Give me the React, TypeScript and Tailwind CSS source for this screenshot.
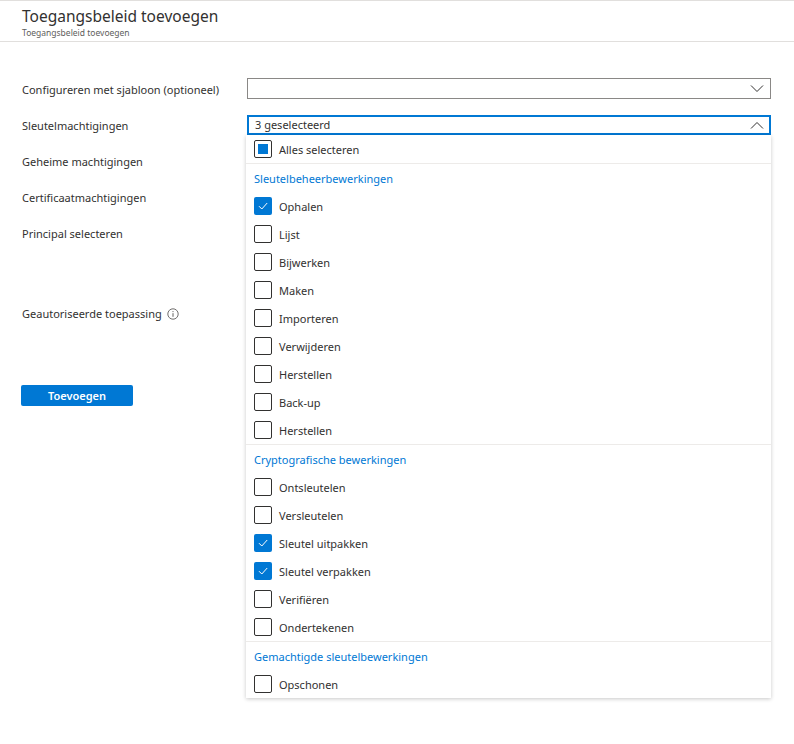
import React from 'react'

// ================================
// TYPES & DATA
// ================================

type CheckState = 'on' | 'off' | 'mixed'

interface Group {
  title: string
  items: { label: string; checked?: boolean }[]
}

const GROUPS: Group[] = [
  {
    title: 'Sleutelbeheerbewerkingen',
    items: [
      { label: 'Ophalen', checked: true },
      { label: 'Lijst' },
      { label: 'Bijwerken' },
      { label: 'Maken' },
      { label: 'Importeren' },
      { label: 'Verwijderen' },
      { label: 'Herstellen' },
      { label: 'Back-up' },
      { label: 'Herstellen' },
    ],
  },
  {
    title: 'Cryptografische bewerkingen',
    items: [
      { label: 'Ontsleutelen' },
      { label: 'Versleutelen' },
      { label: 'Sleutel uitpakken', checked: true },
      { label: 'Sleutel verpakken', checked: true },
      { label: 'Verifiëren' },
      { label: 'Ondertekenen' },
    ],
  },
  {
    title: 'Gemachtigde sleutelbewerkingen',
    items: [{ label: 'Opschonen' }],
  },
]

const LABELS = [
  { text: 'Configureren met sjabloon (optioneel)', h: 'h-[36px]' },
  { text: 'Sleutelmachtigingen', h: 'h-[36px]' },
  { text: 'Geheime machtigingen', h: 'h-[36px]' },
  { text: 'Certificaatmachtigingen', h: 'h-[36px]' },
  { text: 'Principal selecteren', h: 'h-[80px]' },
]

// ================================
// SMALL PARTS
// ================================

const Checkbox = ({ state }: { state: CheckState }) => {
  if (state === 'on') {
    return (
      <span className="w-[18px] h-[18px] rounded-[2px] bg-[#0078d4] flex items-center justify-center shrink-0">
        <svg width="12" height="12" viewBox="0 0 12 12" fill="none">
          <path d="M2 6.2 L4.8 9 L10.2 3" stroke="white" strokeWidth="1" />
        </svg>
      </span>
    )
  }
  return (
    <span className="w-[18px] h-[18px] rounded-[2px] border border-[#323130] flex items-center justify-center shrink-0">
      {state === 'mixed' && <span className="w-[10px] h-[10px] bg-[#0078d4]" />}
    </span>
  )
}

const Chevron = ({ up }: { up?: boolean }) => (
  <svg width="14" height="8" viewBox="0 0 14 8" fill="none">
    <path d={up ? 'M1 7.5 L7 1.5 L13 7.5' : 'M1 0.5 L7 6.5 L13 0.5'} stroke="#323130" strokeWidth="1" />
  </svg>
)

const OptionRow = ({ label, state }: { label: string; state: CheckState }) => (
  <div className="h-[28px] flex items-center gap-[7px] pl-[8px]">
    <Checkbox state={state} />
    <span className="text-[11px] leading-[16px] pt-[2px] text-[#323130]">{label}</span>
  </div>
)

// ================================
// MAIN RENDER
// ================================

export default function App() {
  return (
    <div
      className="w-[794px] h-[744px] bg-white overflow-hidden text-[#323130]"
      style={{ fontFamily: '"Segoe UI", "Noto Sans", sans-serif' }}
    >
      <header className="border-t border-b border-[#e1dfdd] pl-[22px] pt-[5px] h-[42px]">
        <h1 className="text-[15.5px] leading-[21px] text-[#323130]">Toegangsbeleid toevoegen</h1>
        <p className="text-[8.5px] leading-[11px] text-[#605e5c]">Toegangsbeleid toevoegen</p>
      </header>

      <div className="relative pt-[36px] pl-[22px]">
        <div className="flex">
          <div className="w-[225px] pt-[2px]">
            {LABELS.map((l) => (
              <div key={l.text} className={`${l.h} text-[11px] leading-[20px]`}>
                {l.text}
              </div>
            ))}
            <div className="h-[78px] text-[11px] leading-[20px] flex items-start gap-[5px]">
              <span>Geautoriseerde toepassing</span>
              <svg width="12" height="12" viewBox="0 0 12 12" className="mt-[4px]" fill="none">
                <circle cx="6" cy="6" r="5.2" stroke="#605e5c" strokeWidth="0.9" />
                <path d="M6 5.2 V8.8" stroke="#605e5c" strokeWidth="1" />
                <circle cx="6" cy="3.6" r="0.6" fill="#605e5c" />
              </svg>
            </div>
            <button className="w-[112px] h-[21px] bg-[#0078d4] rounded-[2px] text-white text-[11px] font-semibold leading-[21px] -ml-[1px]">
              Toevoegen
            </button>
          </div>

          <div className="w-[524px]">
            <div className="h-[21px] border border-[#8a8886] flex items-center justify-end pr-[6px]">
              <Chevron />
            </div>
            <div className="h-[20px] mt-[16px] border-2 border-[#0078d4] flex items-center justify-between pl-[6px] pr-[5px] text-[11px]">
              <span className="pt-[1px]">3 geselecteerd</span>
              <Chevron up />
            </div>
          </div>
        </div>

        {/* dropdown list, layered over the form */}
        <div className="absolute left-[246px] top-[93px] w-[525px] bg-white shadow-[0_1px_4px_rgba(0,0,0,0.22)]">
          <OptionRow label="Alles selecteren" state="mixed" />
          {GROUPS.map((g) => (
            <div key={g.title} className="border-t border-[#edebe9]">
              <div className="h-[28px] flex items-center pl-[8px] pt-[2px] text-[11px] text-[#0078d4]">{g.title}</div>
              {g.items.map((it, i) => (
                <OptionRow key={i} label={it.label} state={it.checked ? 'on' : 'off'} />
              ))}
            </div>
          ))}
        </div>
      </div>
    </div>
  )
}
